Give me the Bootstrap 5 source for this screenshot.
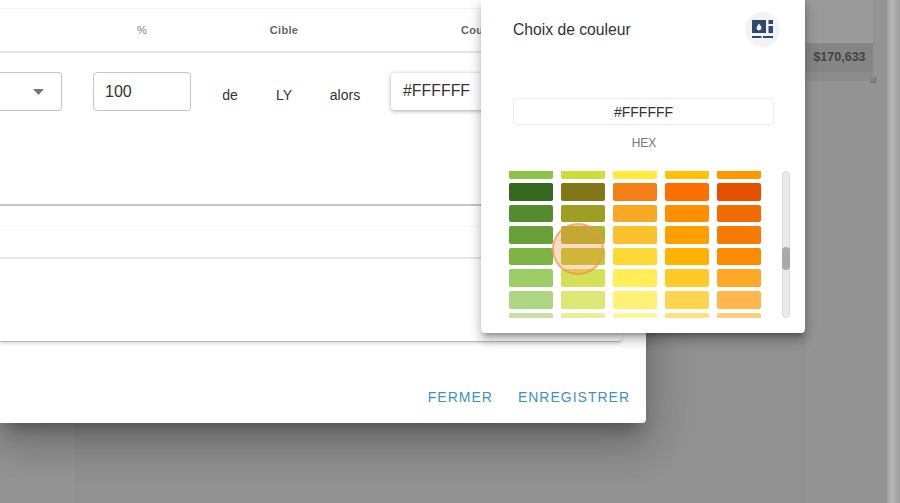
<!DOCTYPE html>
<html lang="fr">

<head>
    <meta charset="UTF-8">
    <title>Choix de couleur</title>
    <link href="https://cdn.jsdelivr.net/npm/bootstrap@5.3.3/dist/css/bootstrap.min.css" rel="stylesheet">
    <style>
        html, body { height: 100%; margin: 0; overflow: hidden; }
        body { font-family: "Liberation Sans", Arial, sans-serif; color: #333; background: #929292; }

        /* page derriere le voile */
        .fond { height: 503px; position: relative; overflow: hidden; background: #919191; }
        .fond-gauche { width: 75px; background: #949494; }
        .fond-milieu { width: 731px; }
        .fond-colonne { width: 67px; background: #949494; }
        .fond-haut { height: 43px; background: #9a9a9a; }
        .fond-total { height: 29px; background: #858585; color: #444; font-size: 12.5px; font-weight: 700; }
        .fond-sous { height: 9px; background: #8c8c8c; }
        .fond-droite { width: 14px; background: #939393; }
        .fond-poignee { position: absolute; left: 870px; top: 77px; width: 6px; height: 6px; border-right: 1px solid #6f6f6f; border-bottom: 1px solid #6f6f6f; background: #848484; }
        .fond-barre { width: 13px; background: linear-gradient(90deg, #a0a0a0, #b8b8b8 40%, #a8a8a8 70%, #9e9e9e); }

        /* dialogue */
        .dialogue { position: absolute; left: 0; top: 0; width: 646px; height: 423px; background: #fff; border-radius: 0 0 4px 0; box-shadow: 0 11px 15px -7px rgba(0,0,0,.3), 0 24px 38px 3px rgba(0,0,0,.15), 0 9px 46px 8px rgba(0,0,0,.12); }
        .grille { display: grid; grid-template-columns: 77px 130px 46px 62px 60px 1fr; align-items: center; }
        .entetes { margin-top: 8px; height: 45px; border-top: 1px solid #f4f4f4; border-bottom: 2px solid #e6e6e6; font-size: 11px; font-weight: 700; color: #666; letter-spacing: .3px; text-align: center; }
        .entetes .pct { color: #808080; font-weight: 400; }
        .entetes .coul { text-align: left; padding-left: 86px; }
        .ligne-form { margin-top: 19px; height: 39px; font-size: 14px; text-align: center; }
        .faux-select { width: 62px; height: 39px; border: 1px solid #c6c6c6; border-left: 0; border-radius: 0 4px 4px 0; padding-right: 17px; }
        .champ.form-control { width: 98px; height: 39px; justify-self: center; border-color: #c6c6c6; border-radius: 4px; padding: 0 11px; font-size: 16px; color: #333; box-shadow: none; }
        .ligne-form .mot { padding-top: 8px; }
        .bouton-couleur { margin-left: 16px; width: 160px; height: 37px; background: #fff; border-radius: 3px; box-shadow: 0 1px 4px rgba(0,0,0,.35); padding: 0 12px 2px; font-size: 15.9px; text-align: left; line-height: 35px; color: #333; }

        .panneau { margin-top: 93px; width: 622px; height: 138px; border-top: 2px solid #c4c4c4; border-bottom: 1px solid #b9b9b9; border-radius: 0 0 4px 0; box-shadow: 0 2px 3px rgba(0,0,0,.12); }
        .panneau-a { height: 21px; border-bottom: 1px solid #f6f6f6; }
        .panneau-b { height: 32px; border-bottom: 2px solid #e5e5e5; }

        .pied { gap: 25px; padding: 0 16px 17px 0; }
        .pied .btn { padding: 0; border: 0; font-size: 14px; line-height: 17px; letter-spacing: 1px; color: #3f8fc7; }

        /* selecteur de couleur */
        .selecteur { position: absolute; left: 481px; top: 0; width: 324px; height: 333px; background: #fff; border-radius: 0 0 4px 4px; box-shadow: 0 5px 5px -3px rgba(0,0,0,.3), 0 8px 10px 1px rgba(0,0,0,.14), 0 3px 14px 2px rgba(0,0,0,.12); }
        .sel-tete { margin: 12px 25px 0 32px; height: 35px; font-size: 15.7px; color: #333; }
        .sel-rond { width: 35px; height: 35px; border-radius: 50%; background: #f2f3f4; }
        .sel-hex.form-control { margin: 51px 31px 0 32px; width: 261px; height: 27px; padding: 0; border-color: #ececec; border-radius: 3px; text-align: center; font-size: 14px; color: #333; box-shadow: none; }
        .sel-label { margin-top: 11px; line-height: 14px; font-size: 12px; color: #777; text-align: center; padding-left: 2px; }
        .sel-zone { margin: 20.5px 0 0 28px; height: 147.5px; }
        .sel-clip { width: 252px; height: 100%; overflow: hidden; }
        .nuancier { display: grid; grid-template-columns: repeat(5, 44px); column-gap: 8px; row-gap: 4px; margin-top: -9px; }
        .nuance { height: 17.6px; border-radius: 2px; }
        .sel-piste { margin-left: 21px; width: 8px; border-radius: 4px; background: #e8e8e8; border: 1px solid #dcdcdc; position: relative; }
        .sel-curseur { position: absolute; left: -1px; top: 75px; width: 8px; height: 23px; border-radius: 4px; background: #a9a9a9; }
        .onde { position: absolute; left: 71px; top: 223px; width: 52px; height: 52px; border-radius: 50%; background: rgba(250,140,70,.3); border: 2px solid rgba(240,150,80,.7); }
    </style>
</head>

<body>
    <div class="fond">
        <div class="d-flex h-100">
            <div class="fond-gauche"></div>
            <div class="fond-milieu"></div>
            <div class="fond-colonne">
                <div class="fond-haut"></div>
                <div class="fond-total d-flex align-items-center justify-content-center">$170,633</div>
                <div class="fond-sous"></div>
            </div>
            <div class="fond-droite"></div>
            <div class="fond-barre"></div>
        </div>
        <div class="fond-poignee"></div>

        <!-- Dialogue -->
        <div class="dialogue d-flex flex-column">
            <div class="grille entetes">
                <div></div>
                <div class="pct">%</div>
                <div></div>
                <div>Cible</div>
                <div></div>
                <div class="coul">Couleur</div>
            </div>
            <div class="grille ligne-form">
                <div class="faux-select d-flex align-items-center justify-content-end">
                    <svg width="11" height="6" viewBox="0 0 11 6"><path d="M0 0h11L5.5 6z" fill="#777"/></svg>
                </div>
                <input type="text" class="form-control champ" value="100">
                <div class="mot">de</div>
                <div class="mot">LY</div>
                <div class="mot">alors</div>
                <div class="bouton-couleur">#FFFFFF</div>
            </div>
            <div class="panneau">
                <div class="panneau-a"></div>
                <div class="panneau-b"></div>
            </div>
            <div class="pied d-flex justify-content-end mt-auto">
                <button type="button" class="btn">FERMER</button>
                <button type="button" class="btn">ENREGISTRER</button>
            </div>
        </div>

        <!-- Choix de couleur -->
        <div class="selecteur d-flex flex-column">
            <div class="sel-tete d-flex align-items-center justify-content-between">
                <span>Choix de couleur</span>
                <div class="sel-rond d-flex align-items-center justify-content-center">
                    <svg width="21" height="19" viewBox="0 0 21 19">
                        <path d="M0 0h14v13H0z" fill="#2f4a6b"/>
                        <path d="M7 3.500c1.200 1.600 2.400 3 2.400 4.600a2.400 2.400 0 0 1-4.800 0C4.600 6.500 5.800 5.100 7 3.500z" fill="#fff"/>
                        <path d="M16.500 0H21v4h-4.500zM16.500 6H21v7h-4.500zM0 16h9.500v2H0zM11 16h10v2H11z" fill="#2f4a6b"/>
                    </svg>
                </div>
            </div>
            <input type="text" class="form-control sel-hex" value="#FFFFFF">
            <div class="sel-label">HEX</div>
            <div class="sel-zone d-flex">
                <div class="sel-clip">
                    <div class="nuancier" id="nuancier"></div>
                </div>
                <div class="sel-piste"><div class="sel-curseur"></div></div>
            </div>
            <div class="onde"></div>
        </div>
    </div>

    <script src="https://cdn.jsdelivr.net/npm/bootstrap@5.3.3/dist/js/bootstrap.bundle.min.js"></script>
    <script>
        const couleurs = [
            '#8BC34A', '#CDDC39', '#FFEB3B', '#FFC107', '#FF9800',
            '#33691E', '#827717', '#F57F17', '#FF6F00', '#E65100',
            '#558B2F', '#9E9D24', '#F9A825', '#FF8F00', '#EF6C00',
            '#689F38', '#AFB42B', '#FBC02D', '#FFA000', '#F57C00',
            '#7CB342', '#C0CA33', '#FDD835', '#FFB300', '#FB8C00',
            '#9CCC65', '#D4E157', '#FFEE58', '#FFCA28', '#FFA726',
            '#AED581', '#DCE775', '#FFF176', '#FFD54F', '#FFB74D',
            '#C5E1A5', '#E6EE9C', '#FFF59D', '#FFE082', '#FFCC80'
        ];
        const nuancier = document.getElementById('nuancier');
        couleurs.forEach((c) => {
            const d = document.createElement('div');
            d.className = 'nuance';
            d.style.background = c;
            nuancier.appendChild(d);
        });
    </script>
</body>

</html>
